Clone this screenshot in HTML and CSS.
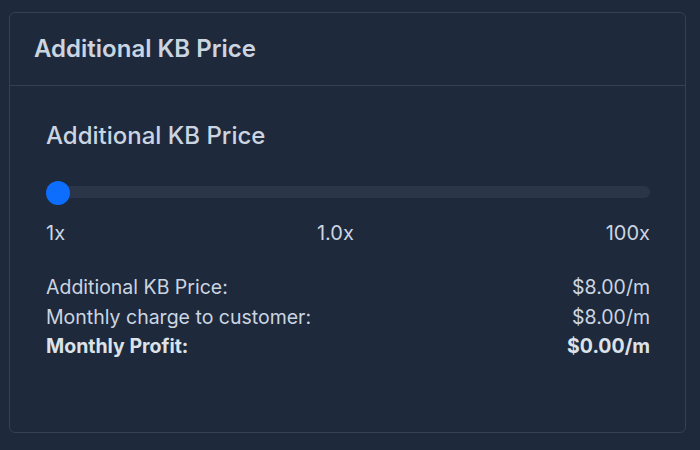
FILE: index.html
```html
<!DOCTYPE html>
<html>
<head>
<meta charset="utf-8">
<link rel="stylesheet" href="styles.css">
</head>
<body>
<div class="card">
  <div class="card-header">
    <h2 class="card-title">Additional KB Price</h2>
  </div>
  <div class="card-body">
    <h3 class="section-title">Additional KB Price</h3>
    <div class="slider">
      <div class="track"></div>
      <div class="thumb"></div>
    </div>
    <div class="scale">
      <span>1x</span>
      <span>1.0x</span>
      <span>100x</span>
    </div>
    <div class="rows">
      <div class="row"><span>Additional KB Price:</span><span>$8.00/m</span></div>
      <div class="row"><span>Monthly charge to customer:</span><span>$8.00/m</span></div>
      <div class="row total"><span>Monthly Profit:</span><span>$0.00/m</span></div>
    </div>
  </div>
</div>
</body>
</html>
```
FILE: styles.css
```css
* { box-sizing: border-box; }
html, body {
  margin: 0;
  padding: 0;
  background: #1e293b;
  font-family: Inter, "Noto Sans", sans-serif;
  color: #cbd5e1;
}
body {
  padding: 12px 14px 0 9px;
  height: 450px;
}
.card {
  height: 421px;
  border: 1px solid #334155;
  border-radius: 6px;
  background: #1e293b;
}
.card-header {
  height: 73px;
  border-bottom: 1px solid #334155;
  padding: 0 24px;
  display: flex;
  align-items: center;
}
.card-title {
  margin: 0;
  font-size: 24px;
  font-weight: 600;
  line-height: 32px;
  color: #cbd5e1;
}
.card-body {
  padding: 36px 35px 0 36px;
}
.section-title {
  margin: 0;
  font-size: 24px;
  font-weight: 500;
  line-height: 28px;
  color: #cbd5e1;
}
.slider {
  position: relative;
  margin-top: 30px;
  height: 24px;
  display: flex;
  align-items: center;
}
.track {
  flex: 1;
  height: 12px;
  border-radius: 6px;
  background: #2b3548;
}
.thumb {
  position: absolute;
  left: 0;
  top: 1px;
  width: 24px;
  height: 24px;
  border-radius: 50%;
  background: #0d6efd;
}
.scale {
  display: flex;
  justify-content: space-between;
  margin-top: 17px;
  font-size: 20px;
  line-height: 24px;
}
.rows {
  margin-top: 28px;
  font-size: 19.5px;
}
.row {
  display: flex;
  justify-content: space-between;
  line-height: 29.5px;
}
.row.total {
  font-weight: 700;
  color: #dbe2ea;
}
```
